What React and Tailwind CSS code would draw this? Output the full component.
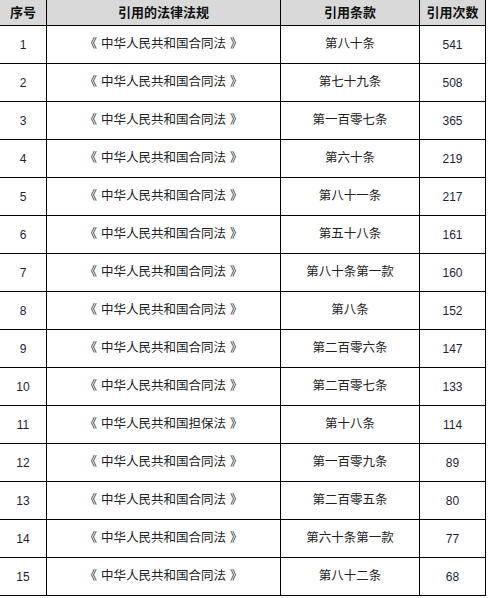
import React from "react";

const rows = [
  ["1", "中华人民共和国合同法", "第八十条", "541"],
  ["2", "中华人民共和国合同法", "第七十九条", "508"],
  ["3", "中华人民共和国合同法", "第一百零七条", "365"],
  ["4", "中华人民共和国合同法", "第六十条", "219"],
  ["5", "中华人民共和国合同法", "第八十一条", "217"],
  ["6", "中华人民共和国合同法", "第五十八条", "161"],
  ["7", "中华人民共和国合同法", "第八十条第一款", "160"],
  ["8", "中华人民共和国合同法", "第八条", "152"],
  ["9", "中华人民共和国合同法", "第二百零六条", "147"],
  ["10", "中华人民共和国合同法", "第二百零七条", "133"],
  ["11", "中华人民共和国担保法", "第十八条", "114"],
  ["12", "中华人民共和国合同法", "第一百零九条", "89"],
  ["13", "中华人民共和国合同法", "第二百零五条", "80"],
  ["14", "中华人民共和国合同法", "第六十条第一款", "77"],
  ["15", "中华人民共和国合同法", "第八十二条", "68"],
];

const font = { fontFamily: '"Liberation Sans", "Noto Sans CJK SC", sans-serif' };

export default function App() {
  const head = ["序号", "引用的法律法规", "引用条款", "引用次数"];
  return (
    <div className="w-[488px] h-[598px] bg-white" style={font}>
      <div className="grid grid-cols-[47px_234px_139px_66px]">
        {head.map((h) => (
          <div
            key={h}
            className="h-[26px] flex items-center justify-center bg-[#d9d9d9] border-r border-b border-black text-[13px] font-bold text-[#111]"
          >
            {h}
          </div>
        ))}
        {rows.map((r) => (
          <React.Fragment key={r[0]}>
            <div className="h-[38px] flex items-center justify-center border-r border-b border-black text-[12px] text-[#1f1f3a]">
              {r[0]}
            </div>
            <div className="h-[38px] flex items-center justify-center border-r border-b border-black text-[12.5px] text-[#222]">
              <span>《</span>
              <span className="mx-[4px]">{r[1]}</span>
              <span>》</span>
            </div>
            <div className="h-[38px] flex items-center justify-center border-r border-b border-black text-[12.5px] text-[#222]">
              {r[2]}
            </div>
            <div className="h-[38px] flex items-center justify-center border-r border-b border-black text-[12px] text-[#1f1f3a]">
              {r[3]}
            </div>
          </React.Fragment>
        ))}
      </div>
    </div>
  );
}
